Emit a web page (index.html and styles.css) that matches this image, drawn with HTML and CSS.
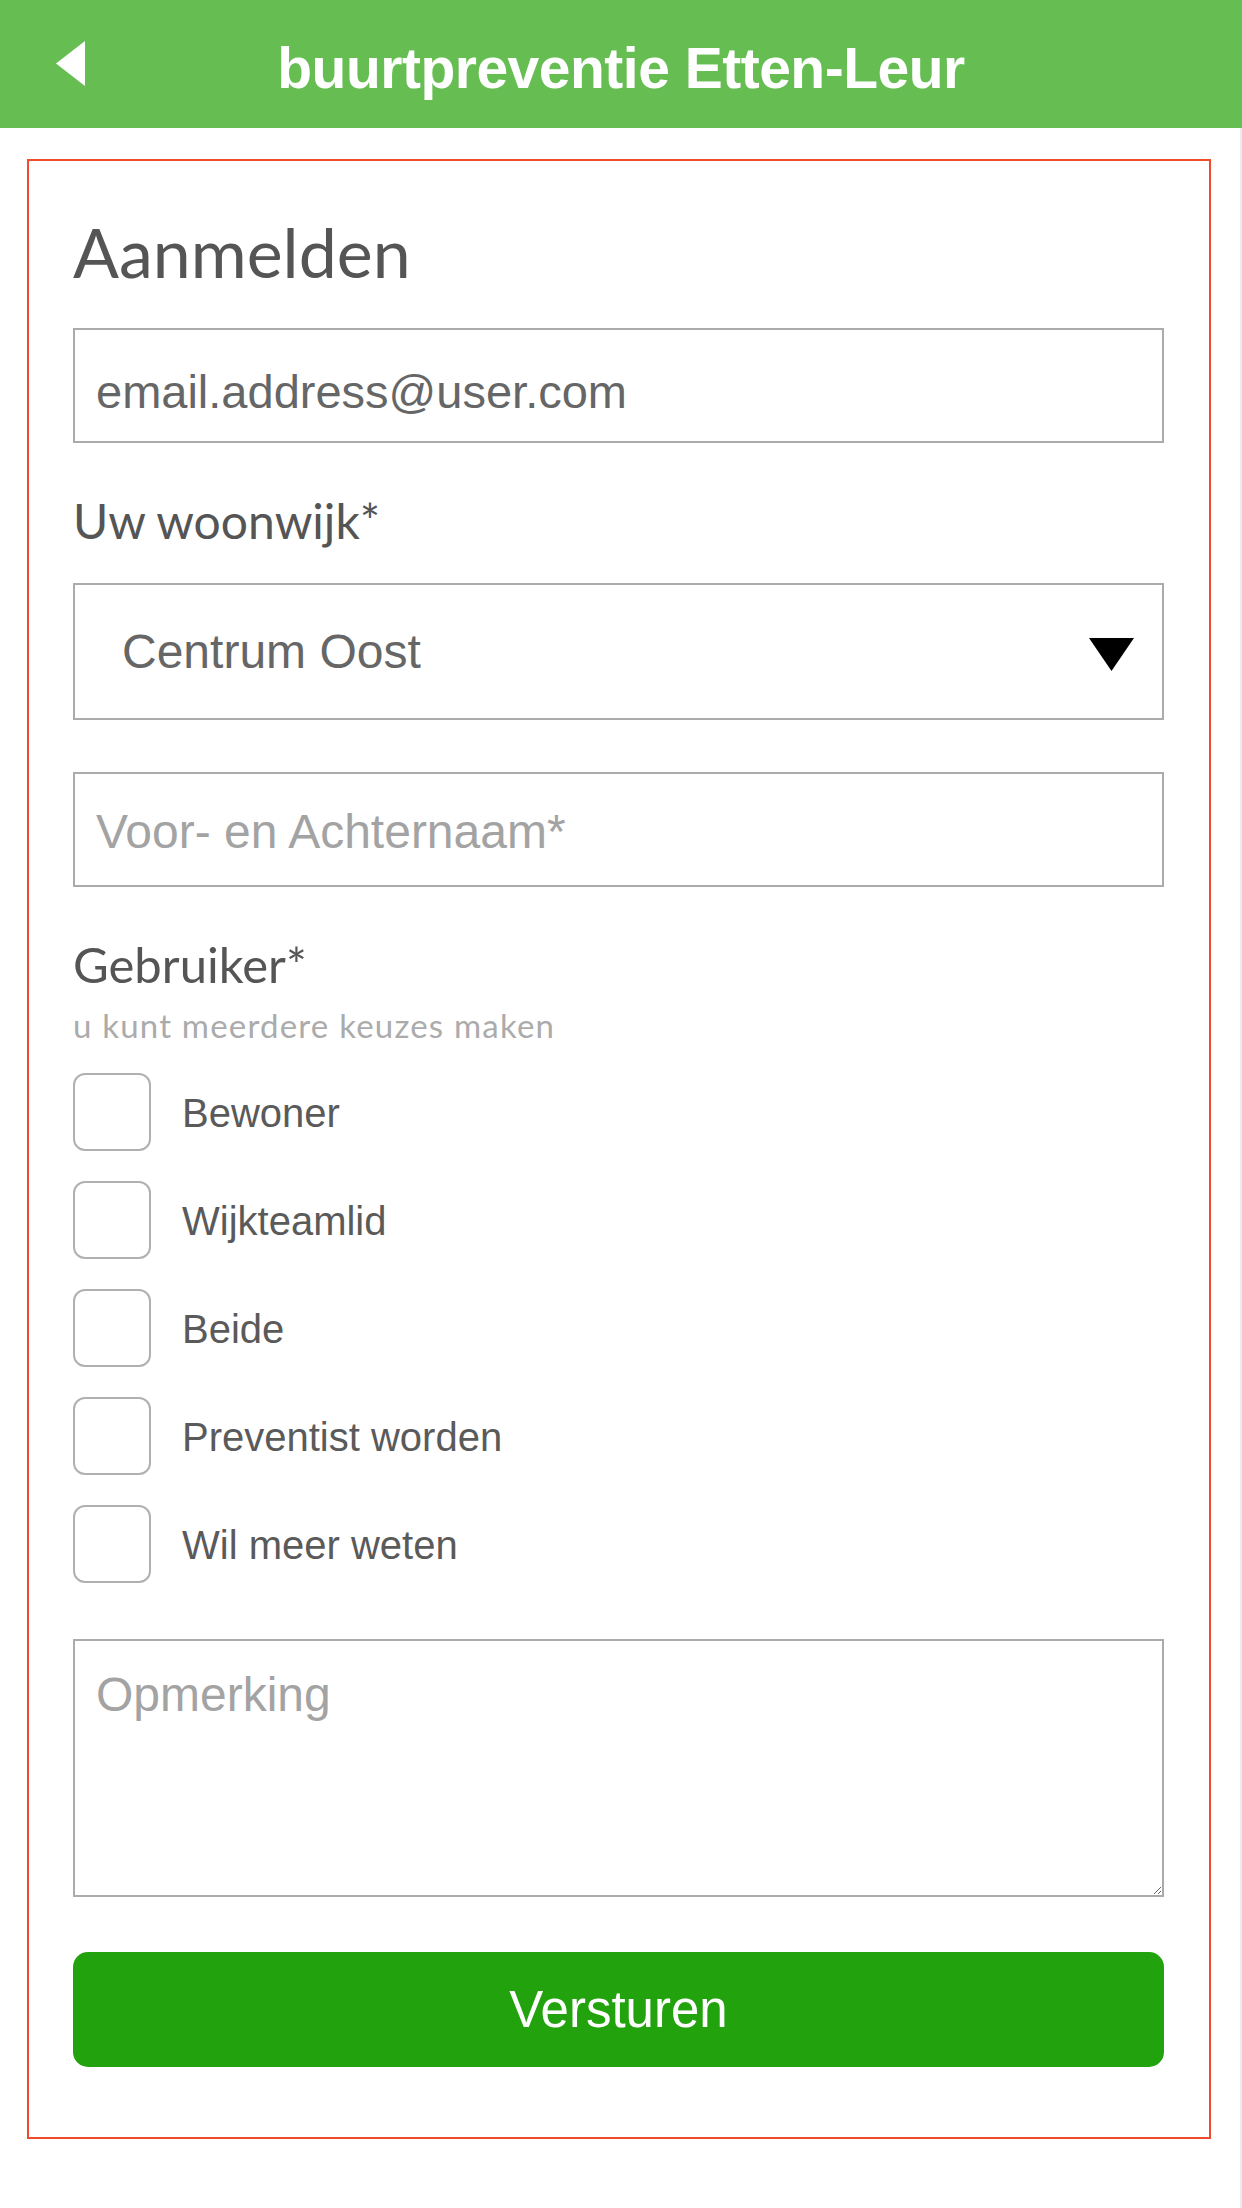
FILE: index.html
```html
<!DOCTYPE html>
<html lang="nl">
<head>
<meta charset="utf-8">
<title>buurtpreventie Etten-Leur</title>
<link rel="stylesheet" href="styles.css">
</head>
<body>
<header class="topbar">
  <div class="topbar-left">
    <svg class="back" width="30" height="45" viewBox="0 0 30 45" aria-label="Terug"><polygon points="30,0 1,22.5 30,45" fill="#ffffff"/></svg>
  </div>
  <h1 class="topbar-title">buurtpreventie Etten-Leur</h1>
  <div></div>
</header>
<div class="page">
  <form class="card">
    <h2 class="card-title">Aanmelden</h2>
    <input class="field field-email" type="text" value="email.address@user.com">
    <div class="label label-wijk">Uw woonwijk*</div>
    <div class="select">
      <span class="select-value">Centrum Oost</span>
      <svg class="select-arrow" width="45" height="33" viewBox="0 0 45 33"><polygon points="0,0 45,0 22.5,33" fill="#000"/></svg>
    </div>
    <input class="field field-name" type="text" placeholder="Voor- en Achternaam*">
    <div class="label label-user">Gebruiker*</div>
    <div class="hint">u kunt meerdere keuzes maken</div>
    <div class="checks">
      <label class="check"><span class="box"></span><span class="check-text">Bewoner</span></label>
      <label class="check"><span class="box"></span><span class="check-text">Wijkteamlid</span></label>
      <label class="check"><span class="box"></span><span class="check-text">Beide</span></label>
      <label class="check"><span class="box"></span><span class="check-text">Preventist worden</span></label>
      <label class="check"><span class="box"></span><span class="check-text">Wil meer weten</span></label>
    </div>
    <textarea class="remark" placeholder="Opmerking"></textarea>
    <button class="submit" type="button">Versturen</button>
  </form>
</div>
</body>
</html>
```
FILE: styles.css
```css
html, body {
  margin: 0;
  padding: 0;
  background: #ffffff;
}
body {
  width: 1242px;
  min-height: 2208px;
  font-family: "Liberation Sans", Arial, sans-serif;
}
.topbar {
  height: 128px;
  background: #66be53;
  display: grid;
  grid-template-columns: 1fr auto 1fr;
  align-items: center;
}
.topbar-left {
  padding-left: 55px;
  display: flex;
  align-items: center;
  padding-bottom: 2px;
}
.back { display: block; }
.topbar-title {
  margin: 0;
  padding-top: 8px;
  color: #ffffff;
  font-family: "Liberation Sans", Arial, sans-serif;
  font-weight: bold;
  font-size: 57px;
  letter-spacing: -0.5px;
  line-height: 1;
}
.page {
  padding: 31px 29px 69px 27px;
  border-right: 2px solid #ececec;
  min-height: 1980px;
  box-sizing: border-box;
}
.card {
  border: 2px solid #f14b2e;
  padding: 51px 45px 70px 44px;
  display: flex;
  flex-direction: column;
  width: 1184px;
  box-sizing: border-box;
}
.card-title {
  margin: 0;
  font-family: Lato, "Open Sans", sans-serif;
  font-weight: normal;
  font-size: 68px;
  line-height: 79px;
  color: #555555;
}
.field {
  display: block;
  box-sizing: border-box;
  width: 100%;
  height: 115px;
  border: 2px solid #ababab;
  border-radius: 0;
  outline: none;
  background: #fff;
  font-family: "Liberation Sans", Arial, sans-serif;
  font-size: 48px;
  color: #666666;
  padding: 12px 21px 0 21px;
  margin: 0;
}
.field::placeholder { color: #a3a3a3; }
.field-email { margin-top: 37px; font-size: 47px; }
.field-name { margin-top: 52px; padding-top: 4px; }
.label {
  font-family: Lato, "Open Sans", sans-serif;
  color: #555555;
}
.label-wijk {
  margin-top: 49px;
  font-size: 48px;
  line-height: 58px;
}
.select {
  margin-top: 33px;
  height: 137px;
  box-sizing: border-box;
  border: 2px solid #ababab;
  display: flex;
  align-items: center;
  justify-content: space-between;
  padding: 0 28px 0 47px;
}
.select-value {
  font-size: 48px;
  color: #666666;
  margin-top: 0;
}
.select-arrow { display: block; margin-top: 6px; }
.label-user {
  margin-top: 47px;
  font-size: 49px;
  line-height: 60px;
}
.hint {
  margin-top: 11px;
  font-family: Lato, "Open Sans", sans-serif;
  font-size: 33px;
  letter-spacing: 1.2px;
  line-height: 40px;
  color: #ababab;
}
.checks {
  margin-top: 28px;
  display: flex;
  flex-direction: column;
  gap: 30px;
}
.check {
  display: flex;
  align-items: center;
  gap: 31px;
  height: 78px;
}
.box {
  width: 78px;
  height: 78px;
  box-sizing: border-box;
  border: 2px solid #b0b0b0;
  border-radius: 12px;
  flex: none;
}
.check-text {
  font-size: 40px;
  color: #5a5a5a;
  padding-top: 2px;
}
.remark {
  margin-top: 56px;
  display: block;
  box-sizing: border-box;
  width: 100%;
  height: 258px;
  border: 2px solid #ababab;
  border-radius: 0;
  outline: none;
  font-family: "Liberation Sans", Arial, sans-serif;
  font-size: 48px;
  color: #666;
  padding: 26px 21px 0 21px;
}
.remark::placeholder { color: #a3a3a3; }
.submit {
  margin-top: 55px;
  height: 115px;
  width: 100%;
  border: none;
  border-radius: 15px;
  background: #22a30d;
  color: #ffffff;
  font-family: "Liberation Sans", Arial, sans-serif;
  font-size: 51px;
  cursor: pointer;
}
```
